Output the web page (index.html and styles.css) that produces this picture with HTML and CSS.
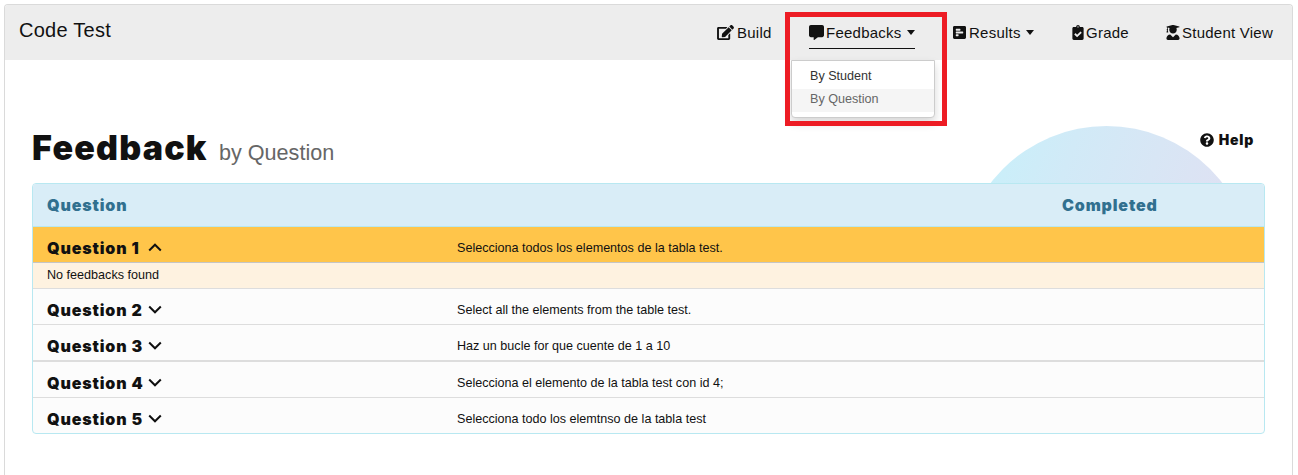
FILE: index.html
```html
<!DOCTYPE html>
<html lang="en">
<head>
<meta charset="utf-8">
<title>Code Test</title>
<link rel="stylesheet" href="styles.css">
</head>
<body>
<div class="frame">
  <header class="topbar">
    <div class="brand">Code Test</div>
    <nav class="nav">
      <a class="nav-item"><svg class="icon-edit" viewBox="0 0 576 512"><path d="M402.600 83.200l90.200 90.200c3.800 3.800 3.800 10 0 13.800L274.400 405.600l-92.800 10.300c-12.400 1.400-22.900-9.100-21.500-21.500l10.300-92.800L388.800 83.200c3.800-3.800 10-3.800 13.800 0zm162-22.900l-48.800-48.800c-15.200-15.200-39.900-15.200-55.200 0l-35.400 35.400c-3.800 3.800-3.800 10 0 13.800l90.200 90.200c3.800 3.800 10 3.800 13.800 0l35.400-35.400c15.200-15.300 15.200-40 0-55.200zM384 346.200V448H64V128h229.800c3.200 0 6.200-1.300 8.500-3.500l40-40c7.600-7.600 2.200-20.500-8.500-20.500H48C21.500 64 0 85.500 0 112v352c0 26.500 21.500 48 48 48h352c26.500 0 48-21.500 48-48V306.200c0-10.700-12.900-16-20.500-8.500l-40 40c-2.200 2.300-3.500 5.300-3.500 8.500z"/></svg><span>Build</span></a>
      <a class="nav-item active"><svg class="icon-comment" viewBox="0 0 512 512"><path d="M448 0H64C28.700 0 0 28.700 0 64v288c0 35.300 28.700 64 64 64h96v84c0 9.800 11.200 15.500 19.100 9.700L304 416h144c35.300 0 64-28.700 64-64V64c0-35.300-28.700-64-64-64z"/></svg><span>Feedbacks</span><i class="caret"></i></a>
      <a class="nav-item"><svg class="icon-poll" viewBox="0 0 448 512"><path d="M448 432V80c0-26.500-21.500-48-48-48H48C21.500 32 0 53.500 0 80v352c0 26.500 21.500 48 48 48h352c26.500 0 48-21.500 48-48zM112 192c-8.800 0-16-7.200-16-16v-32c0-8.800 7.200-16 16-16h128c8.800 0 16 7.200 16 16v32c0 8.800-7.200 16-16 16H112zm0 96c-8.800 0-16-7.200-16-16v-32c0-8.800 7.200-16 16-16h224c8.800 0 16 7.200 16 16v32c0 8.800-7.200 16-16 16H112zm0 96c-8.800 0-16-7.200-16-16v-32c0-8.800 7.200-16 16-16h64c8.800 0 16 7.200 16 16v32c0 8.800-7.200 16-16 16h-64z"/></svg><span>Results</span><i class="caret"></i></a>
      <a class="nav-item"><svg class="icon-clip" viewBox="0 0 384 512"><path d="M336 64h-80c0-35.300-28.700-64-64-64s-64 28.700-64 64H48C21.500 64 0 85.500 0 112v352c0 26.500 21.500 48 48 48h288c26.500 0 48-21.500 48-48V112c0-26.500-21.500-48-48-48zM192 40c13.300 0 24 10.700 24 24s-10.700 24-24 24-24-10.700-24-24 10.700-24 24-24zm121.200 231.800l-143 141.800c-4.700 4.700-12.300 4.600-17-.1l-82.600-83.300c-4.700-4.700-4.600-12.300.1-17L99.100 285c4.700-4.700 12.300-4.600 17 .1l46 46.400 106-105.200c4.700-4.700 12.300-4.600 17 .1l28.200 28.400c4.700 4.800 4.600 12.300-.1 17z"/></svg><span>Grade</span></a>
      <a class="nav-item"><svg class="icon-grad" viewBox="0 0 448 512"><path d="M319.400 320.600L224 416l-95.400-95.400C57.100 323.700 0 382.200 0 454.400v9.600c0 26.500 21.500 48 48 48h352c26.500 0 48-21.500 48-48v-9.600c0-72.200-57.100-130.700-128.600-133.800zM13.600 79.800l6.400 1.500v58.400c-7 4.200-12 11.500-12 20.300 0 8.400 4.600 15.400 11.100 19.700L3.500 242c-1.700 6.900 2.100 14 7.600 14h41.800c5.500 0 9.300-7.100 7.600-14l-15.600-62.300C51.400 175.400 56 168.400 56 160c0-8.800-5-16.100-12-20.300V87.100l66 15.900c-8.600 17.200-14 36.400-14 57 0 70.700 57.300 128 128 128s128-57.300 128-128c0-20.600-5.300-39.800-14-57l96.300-23.200c18.200-4.400 18.200-27.100 0-31.500l-190.400-46c-13-3.100-26.700-3.100-39.700 0L13.600 48.200c-18.100 4.400-18.100 27.200 0 31.600z"/></svg><span>Student View</span></a>
    </nav>
    <div class="menu">
      <div class="menu-item">By Student</div>
      <div class="menu-item hovered">By Question</div>
    </div>
    <div class="highlight"></div>
  </header>
  <main class="content">
    <div class="disc"></div>
    <div class="heading">
      <h1 class="title">Feedback</h1>
      <span class="subtitle">by Question</span>
      <a class="help"><svg class="icon-help" viewBox="0 0 512 512"><path d="M504 256c0 137-111 248-248 248S8 393 8 256C8 119.100 119 8 256 8s248 111.100 248 248zM262.700 90c-54.500 0-89.300 23-116.500 63.800-3.500 5.300-2.400 12.400 2.700 16.300l34.700 26.300c5.200 3.900 12.600 3 16.700-2.100 17.900-22.700 30.100-35.800 57.300-35.800 20.400 0 45.700 13.100 45.700 33 0 15-12.400 22.700-32.500 34C247.100 238.500 216 254.900 216 296v4c0 6.600 5.400 12 12 12h56c6.600 0 12-5.400 12-12v-1.300c0-28.500 83.200-29.600 83.200-106.700 0-58-60.200-102-116.500-102zM256 338c-25.400 0-46 20.600-46 46s20.600 46 46 46 46-20.600 46-46-20.600-46-46-46z"/></svg><span>Help</span></a>
    </div>
    <section class="table">
      <div class="thead"><span class="col-name">Question</span><span class="col-done">Completed</span></div>
      <div class="row open"><span class="name"><span class="label">Question 1</span><svg class="chev" viewBox="0 0 14 9"><path d="M1.200 7.500 7 1.700l5.800 5.800"/></svg></span><span class="desc">Selecciona todos los elementos de la tabla test.</span></div>
      <div class="empty">No feedbacks found</div>
      <div class="row"><span class="name"><span class="label">Question 2</span><svg class="chev" viewBox="0 0 14 9"><path d="M1.200 1.500 7 7.300l5.800-5.800"/></svg></span><span class="desc">Select all the elements from the table test.</span></div>
      <div class="row thick"><span class="name"><span class="label">Question 3</span><svg class="chev" viewBox="0 0 14 9"><path d="M1.200 1.500 7 7.300l5.800-5.800"/></svg></span><span class="desc">Haz un bucle for que cuente de 1 a 10</span></div>
      <div class="row"><span class="name"><span class="label">Question 4</span><svg class="chev" viewBox="0 0 14 9"><path d="M1.200 1.500 7 7.300l5.800-5.800"/></svg></span><span class="desc">Selecciona el elemento de la tabla test con id 4;</span></div>
      <div class="row last"><span class="name"><span class="label">Question 5</span><svg class="chev" viewBox="0 0 14 9"><path d="M1.200 1.500 7 7.300l5.800-5.800"/></svg></span><span class="desc">Selecciona todo los elemtnso de la tabla test</span></div>
    </section>
  </main>
</div>
</body>
</html>
```
FILE: styles.css
```css
* { box-sizing: border-box; }
body {
  margin: 0;
  height: 475px;
  padding: 4px 5px 0 4px;
  background: #fff;
  color: #111;
  font-family: "Liberation Sans", Arial, sans-serif;
}
.frame {
  position: relative;
  height: 471px;
  border: 1px solid #dadada;
  border-bottom: 0;
  border-radius: 4px 4px 0 0;
}
.topbar {
  display: flex;
  justify-content: space-between;
  height: 55px;
  background: #ededed;
  border-radius: 3px 3px 0 0;
}
.brand { padding-left: 14px; font-size: 20px; line-height: 50px; letter-spacing: .250px; }
.nav {
  display: grid;
  grid-template-columns: 92px 144px 119px 94px 126px;
  padding-top: 11px;
}
.nav-item {
  display: flex;
  align-items: center;
  justify-self: start;
  height: 33px;
  font-size: 15px;
  letter-spacing: .24px;
  white-space: nowrap;
}
.nav-item span { padding-bottom: 1px; }
.nav-item svg, .icon-help { flex: none; fill: #111; }
.nav-item.active { border-bottom: 1px solid #111; border-top: 1px solid transparent; }
.icon-edit { width: 17px; height: 15px; margin-right: 3px; }
.icon-comment { width: 15px; height: 15px; margin-right: 2px; }
.icon-poll { width: 13px; height: 15px; margin-right: 3px; }
.icon-clip { width: 12px; height: 15px; margin-right: 2px; }
.icon-grad { width: 14px; height: 15px; margin-right: 2px; }
.caret {
  border: 4.500px solid transparent;
  border-top: 5px solid #111;
  border-bottom: 0;
  margin-left: 5px;
}
.menu {
  position: absolute;
  z-index: 2;
  left: 786px;
  top: 55px;
  width: 144px;
  height: 58px;
  padding-top: 4px;
  border: 1px solid #ccc;
  border-radius: 0 0 4px 4px;
  background: #fff;
  box-shadow: 0 5px 10px rgba(0, 0, 0, .16);
  font-size: 12.600px;
}
.menu-item { height: 24px; padding-left: 18px; line-height: 22px; color: #333; }
.menu-item.hovered { height: 23px; line-height: 20px; background: #f5f5f5; color: #666; }
.highlight {
  position: absolute;
  z-index: 3;
  left: 780px;
  top: 7px;
  width: 162px;
  height: 114px;
  border: 5px solid #ed1c24;
}
.content { position: relative; padding: 0 27px; }
.disc {
  position: absolute;
  left: 955px;
  top: 66px;
  width: 293px;
  height: 293px;
  border-radius: 50%;
  background: linear-gradient(110deg, #c8f0fa 8%, #d1eaf7 30%, #d8e6f5 52%, #e2dff2 85%);
}
.heading {
  position: relative;
  display: flex;
  align-items: baseline;
  height: 123px;
  padding-top: 68px;
}
.title {
  width: 187px;
  margin: 0;
  font-family: Inter, sans-serif;
  font-weight: 900;
  font-size: 34px;
  letter-spacing: 1.200px;
  line-height: 40px;
}
.subtitle { font-size: 21.600px; color: #666; }
.help {
  display: flex;
  align-items: center;
  align-self: flex-start;
  margin-left: auto;
  margin-right: 11px;
  padding-top: 3px;
  font-family: Inter, sans-serif;
  font-size: 14px;
  font-weight: 900;
  letter-spacing: .800px;
}
.icon-help { width: 14px; height: 14px; margin-right: 5px; }
.table {
  position: relative;
  width: 1233px;
  height: 251px;
  border: 1px solid #b8e8f1;
  border-radius: 4px;
  overflow: hidden;
  background: #fcfcfc;
}
.thead {
  display: flex;
  height: 43px;
  padding-left: 14px;
  border-bottom: 1px solid #b8e8f1;
  background: #d9edf7;
  color: #31708f;
  font-family: Inter, sans-serif;
  font-size: 16px;
  font-weight: 900;
  letter-spacing: .850px;
  line-height: 43px;
}
.col-name { width: 1015px; }
.row {
  display: flex;
  height: 36px;
  padding-left: 14px;
  border-bottom: 1px solid #ddd;
  line-height: 42px;
}
.row.open { background: #ffc54a; border-color: #c5c5c5; }
.row.thick { height: 37px; border-bottom-width: 2px; }
.row.last { border-bottom: 0; }
.name {
  display: flex;
  width: 410px;
  font-family: Inter, sans-serif;
  font-size: 16px;
  font-weight: 900;
  letter-spacing: .850px;
}
.label { width: 101px; }
.chev {
  width: 14px;
  height: 9px;
  margin-top: 16px;
  fill: none;
  stroke: #111;
  stroke-width: 2;
}
.desc { font-size: 12.580px; line-height: 42px; }
.empty {
  height: 26px;
  padding-left: 14px;
  border-bottom: 1px solid #ddd;
  background: #fef2e0;
  font-size: 12.600px;
  line-height: 24px;
}
```
